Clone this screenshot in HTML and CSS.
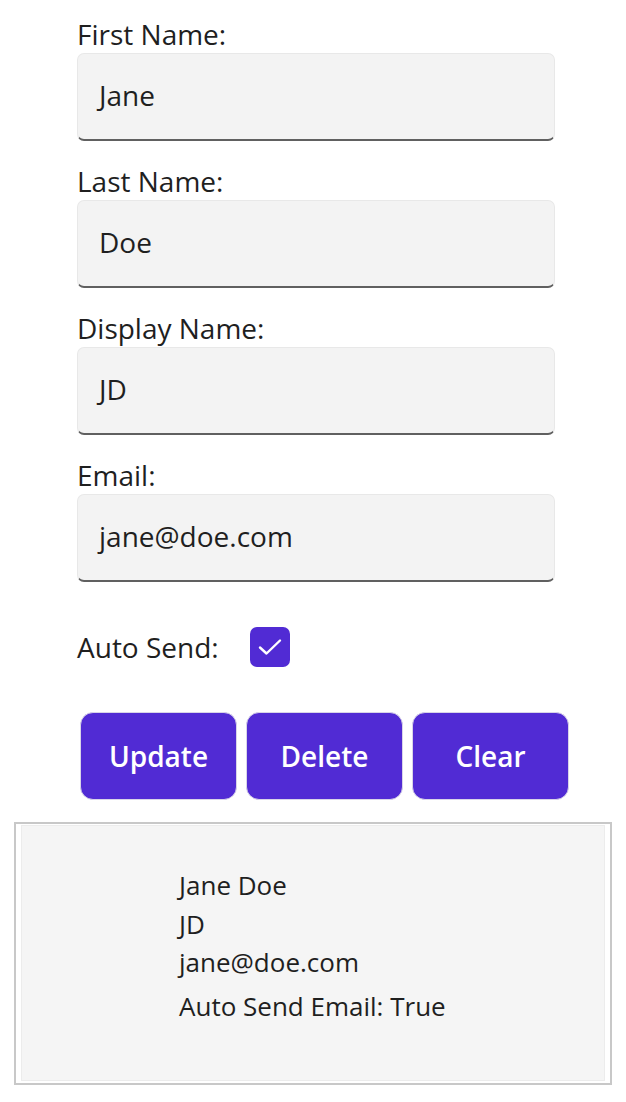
FILE: index.html
```html
<!DOCTYPE html>
<html>
<head>
<meta charset="utf-8">
<link rel="stylesheet" href="styles.css">
</head>
<body>
<div class="form">
  <div class="field">
    <div class="label">First Name:</div>
    <div class="entry">Jane</div>
  </div>
  <div class="field">
    <div class="label">Last Name:</div>
    <div class="entry">Doe</div>
  </div>
  <div class="field">
    <div class="label">Display Name:</div>
    <div class="entry">JD</div>
  </div>
  <div class="field">
    <div class="label">Email:</div>
    <div class="entry">jane@doe.com</div>
  </div>
  <div class="check-row">
    <span class="label">Auto Send:</span>
    <span class="checkbox">
      <svg width="24" height="18" viewBox="0 0 24 18"><path d="M2 9.5 L8.5 15.5 L22 2.5" fill="none" stroke="#fff" stroke-width="2.4" stroke-linecap="round" stroke-linejoin="round"/></svg>
    </span>
  </div>
  <div class="buttons">
    <div class="btn">Update</div>
    <div class="btn">Delete</div>
    <div class="btn">Clear</div>
  </div>
</div>
<div class="result">
  <div class="result-inner">
    <div class="line">Jane Doe</div>
    <div class="line">JD</div>
    <div class="line">jane@doe.com</div>
    <div class="line last">Auto Send Email: True</div>
  </div>
</div>
</body>
</html>
```
FILE: styles.css
```css
html, body {
  margin: 0;
  padding: 0;
  background: #ffffff;
}
body {
  font-family: "Open Sans", "Noto Sans", sans-serif;
  color: #1f1f1f;
  width: 626px;
}
.form {
  padding: 15px 0 0 77px;
}
.field {
  width: 478px;
  display: flex;
  flex-direction: column;
  gap: 0;
  margin-bottom: 21px;
}
.field:first-child {
  margin-bottom: 21px;
}
.label {
  font-size: 28px;
  line-height: 38px;
}
.entry {
  box-sizing: border-box;
  height: 88px;
  background: #f3f3f3;
  border: 1px solid #e8e8e8;
  border-bottom: 2px solid #606060;
  border-radius: 7px;
  padding: 0 0 3px 21px;
  display: flex;
  align-items: center;
  font-size: 28px;
}
.check-row {
  display: flex;
  align-items: center;
  margin-top: 45px;
  height: 40px;
}
.check-row .label {
  width: 173px;
}
.checkbox {
  width: 40px;
  height: 40px;
  border-radius: 7px;
  background: #512bd4;
  display: flex;
  align-items: center;
  justify-content: center;
}
.buttons {
  display: flex;
  gap: 9px;
  margin-top: 45px;
  padding-left: 3px;
}
.btn {
  box-sizing: border-box;
  flex: 0 0 157px;
  height: 88px;
  background: #512bd4;
  border: 1px solid #d8d4e8;
  border-radius: 13px;
  color: #ffffff;
  font-size: 28px;
  font-weight: 600;
  display: flex;
  align-items: center;
  justify-content: center;
}
.result {
  box-sizing: border-box;
  margin: 22px 0 0 14px;
  width: 598px;
  height: 263px;
  border: 2px solid #c8c8c8;
  padding: 1px 5px 2px 5px;
}
.result-inner {
  box-sizing: border-box;
  height: 100%;
  background: #f5f5f5;
  border: 1px solid #ececec;
  padding: 40px 0 0 157px;
}
.line {
  font-size: 26px;
  line-height: 38.5px;
}
.line.last {
  margin-top: 5px;
}
```
